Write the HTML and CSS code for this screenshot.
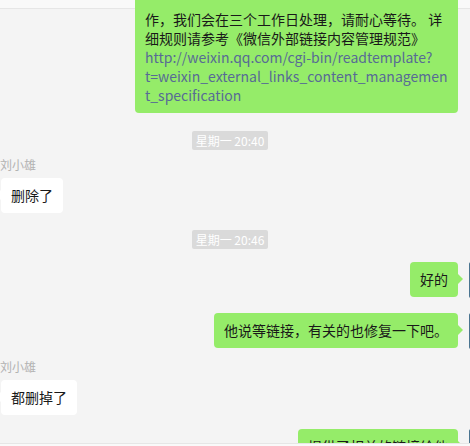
FILE: index.html
```html
<!DOCTYPE html>
<html lang="zh">
<head>
    <meta charset="UTF-8">
    <meta name="viewport" content="width=device-width, initial-scale=1.0">
    <title>聊天记录</title>
    <link rel="stylesheet" href="styles.css">
</head>
<body>
    <div class="window">
        <div class="topbar"></div>

        <div class="chat">
            <div class="msg msg-me first">
                <div class="bubble">作，我们会在三个工作日处理，请耐心等待。 详<br>细规则请参考《微信外部链接内容管理规范》<br><span class="link">http://weixin.qq.com/cgi-bin/readtemplate?<br>t=weixin_external_links_content_managemen<br>t_specification</span></div>
                <div class="avatar"></div>
            </div>

            <div class="time"><span>星期一 20:40</span></div>

            <div class="msg msg-other">
                <div class="avatar"></div>
                <div class="msg-body">
                    <div class="name">刘小雄</div>
                    <div class="bubble">删除了</div>
                </div>
            </div>

            <div class="time t2"><span>星期一 20:46</span></div>

            <div class="msg msg-me m-ok">
                <div class="bubble">好的</div>
                <div class="avatar"></div>
            </div>

            <div class="msg msg-me m-fix">
                <div class="bubble">他说等链接，有关的也修复一下吧。</div>
                <div class="avatar"></div>
            </div>

            <div class="msg msg-other m-del">
                <div class="avatar"></div>
                <div class="msg-body">
                    <div class="name">刘小雄</div>
                    <div class="bubble">都删掉了</div>
                </div>
            </div>

            <div class="msg msg-me m-last">
                <div class="bubble">提供了相关的链接给他</div>
                <div class="avatar"></div>
            </div>
        </div>

        <div class="bottombar"></div>
    </div>
</body>
</html>
```

FILE: styles.css
```css
body {
    margin: 0;
    background-color: #f4f4f4;
    font-family: "Noto Sans CJK SC", sans-serif;
    overflow: hidden;
}
.window {
    width: 470px;
    height: 446px;
    overflow: hidden;
}
.topbar {
    height: 8px;
    background-color: #f9f9f9;
    border-bottom: 1px solid #e6e6e6;
}
.bottombar {
    position: fixed;
    left: 0;
    right: 0;
    top: 443px;
    height: 3px;
    background-color: #f9f9f9;
    border-top: 1px solid #e6e6e6;
    z-index: 2;
}
.chat {
    width: 550px;
    margin-left: -45px;
}
.msg {
    display: flex;
    align-items: flex-start;
    position: relative;
    z-index: 1;
}
.msg-me {
    justify-content: flex-end;
}
.avatar {
    width: 36px;
    height: 36px;
    flex-shrink: 0;
    background-color: #4a7490;
    border-radius: 2px;
}
.msg-other .avatar {
    background-color: #c8c8c8;
    margin-right: 10px;
}
.msg-me .avatar {
    margin-left: 11px;
}
.bubble {
    position: relative;
    padding: 8px 10px;
    font-size: 14px;
    line-height: 19px;
    color: #191919;
    background-color: #ffffff;
    border-radius: 4px;
    word-break: break-all;
}
.msg-me .bubble {
    background-color: #95ec69;
}
.msg-me .bubble::after {
    content: "";
    position: absolute;
    top: 12px;
    right: -5px;
    border-top: 5px solid transparent;
    border-bottom: 5px solid transparent;
    border-left: 5px solid #95ec69;
}
.msg-other .bubble::before {
    content: "";
    position: absolute;
    top: 12px;
    left: -5px;
    border-top: 5px solid transparent;
    border-bottom: 5px solid transparent;
    border-right: 5px solid #ffffff;
}
.first {
    margin-top: -39px;
}
.first .bubble {
    width: 303px;
    padding-top: 40px;
    white-space: nowrap;
}
.first .bubble::after {
    display: none;
}
.first .avatar {
    visibility: hidden;
}
.link {
    color: #576b95;
}
.name {
    font-size: 12px;
    line-height: 16px;
    color: #b2b2b2;
    margin-bottom: 5px;
    margin-left: -1px;
}
.msg-other {
    margin-top: 7px;
}
.time {
    display: flex;
    justify-content: center;
    margin-top: 18px;
}
.time span {
    padding: 0 4px;
    font-size: 12px;
    line-height: 19px;
    color: #ffffff;
    background-color: #dadada;
    border-radius: 2px;
}
.t2 {
    margin-top: 17px;
}
.m-ok {
    margin-top: 13px;
}
.m-fix {
    margin-top: 15px;
}
.m-del {
    margin-top: 10px;
}
.m-last {
    margin-top: 14px;
}
```
